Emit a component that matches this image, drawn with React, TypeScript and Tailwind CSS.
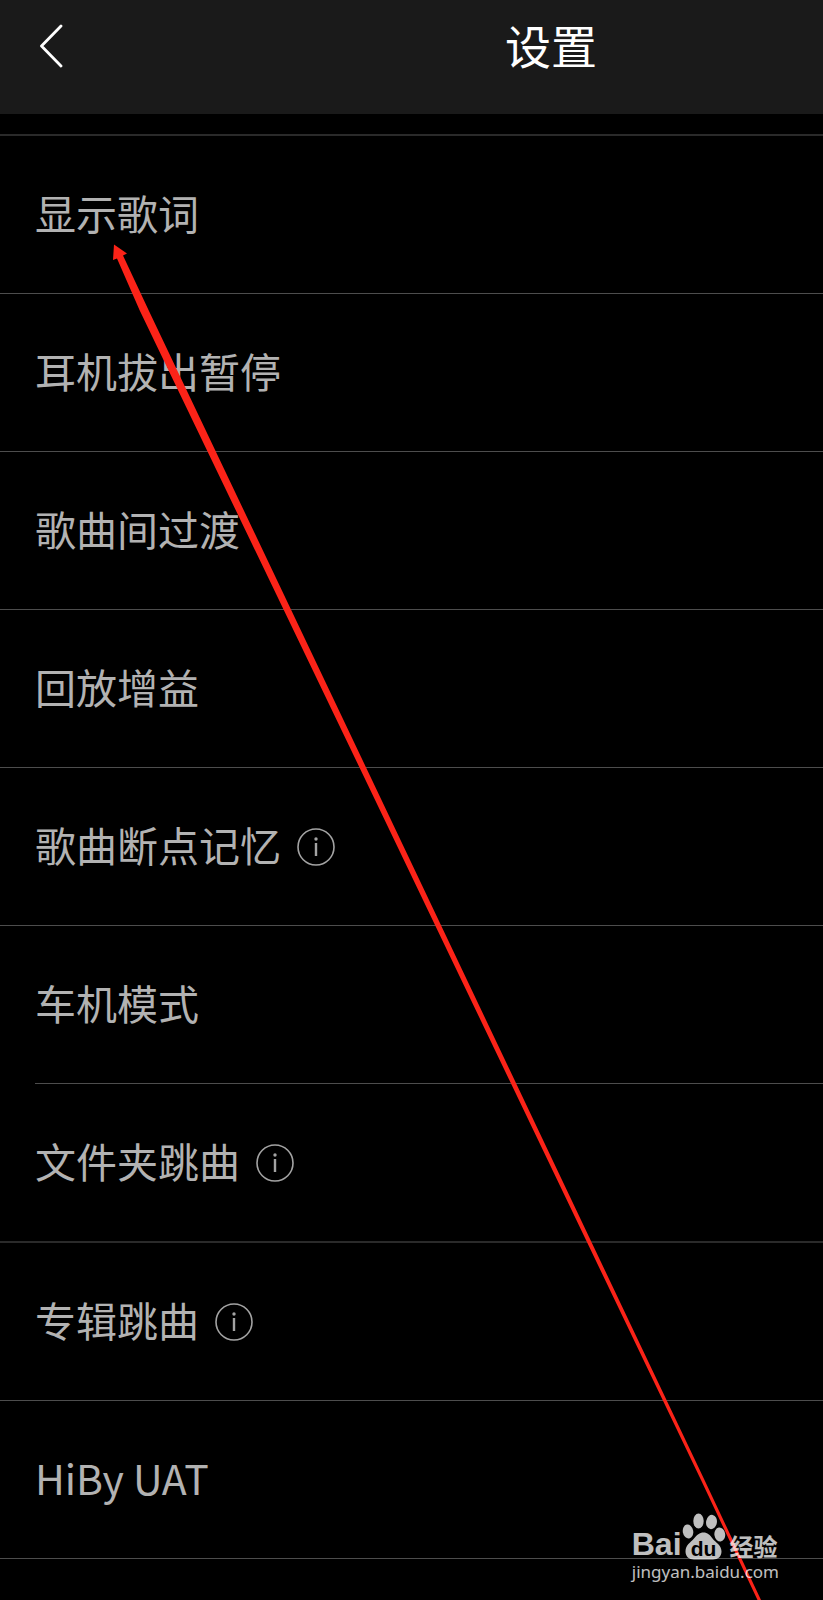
import clsx from "clsx"

type Divider = "full" | "inset" | "thick"

interface SettingItem {
  label: string
  hasInfo?: boolean
  divider?: Divider
}

const settings: SettingItem[] = [
  { label: "显示歌词" },
  { label: "耳机拔出暂停" },
  { label: "歌曲间过渡" },
  { label: "回放增益" },
  { label: "歌曲断点记忆", hasInfo: true },
  { label: "车机模式", divider: "inset" },
  { label: "文件夹跳曲", hasInfo: true, divider: "thick" },
  { label: "专辑跳曲", hasInfo: true },
  { label: "HiBy UAT" },
]

export default function App() {
  return (
    <div className="relative min-h-screen overflow-hidden bg-black pb-[41px] font-['Noto_Sans_CJK_SC',sans-serif]">
      <Header />

      <main className="mt-5 border-t-2 border-[#2a2a2a]">
        <ul>
          {settings.map((item) => (
            <SettingRow key={item.label} {...item} />
          ))}
        </ul>
      </main>

      <PointerArrow />
      <Watermark />
    </div>
  )
}

function Header() {
  return (
    <header className="flex h-[114px] items-start justify-between bg-[#1a1a1a] pt-3 pr-[226px] pl-9">
      <button
        type="button"
        aria-label="返回"
        className="flex h-[68px] w-8 items-center justify-center text-white"
      >
        <svg
          viewBox="0 0 24 44"
          className="h-11 w-6"
          fill="none"
          stroke="currentColor"
          strokeWidth="2.8"
          strokeLinecap="round"
          strokeLinejoin="round"
        >
          <path d="M21 2 1.5 22 21 42" />
        </svg>
      </button>
      <h1 className="text-[46px] leading-16 text-white">设置</h1>
    </header>
  )
}

function SettingRow({ label, hasInfo, divider = "full" }: SettingItem) {
  return (
    <li className={clsx(divider === "inset" && "pl-[35px]")}>
      <div
        className={clsx(
          "flex items-center gap-4",
          divider === "thick"
            ? "border-b-2 border-[#2a2a2a]"
            : "border-b border-[#4d4d4d]",
          divider !== "inset" && "pl-[35px]",
        )}
      >
        <button
          type="button"
          className="h-[157px] pb-1.5 text-left text-[41px] leading-[60px] text-[#b2b2b2]"
        >
          {label}
        </button>
        {hasInfo ? (
          <button
            type="button"
            aria-label={`${label}说明`}
            className="text-[#a3a3a3]"
          >
            <InfoIcon />
          </button>
        ) : null}
      </div>
    </li>
  )
}

function InfoIcon() {
  return (
    <svg viewBox="0 0 38 38" className="size-[38px]" fill="none">
      <circle cx="19" cy="19" r="18" stroke="currentColor" strokeWidth="1.6" />
      <circle cx="19" cy="11" r="1.7" fill="currentColor" />
      <path d="M19 15v13" stroke="currentColor" strokeWidth="2.4" />
    </svg>
  )
}

function PointerArrow() {
  return (
    <svg
      viewBox="0 0 823 1600"
      className="pointer-events-none absolute top-0 left-0 w-full"
      aria-hidden="true"
    >
      <path
        d="M114 244.5 127 253.5 123 255.5 148.5 310 372 780 704.5 1480 761 1600H757.5L701 1480 365.5 780 139.5 310 117 258.5 113 260Z"
        fill="#fb2318"
      />
    </svg>
  )
}

function Watermark() {
  return (
    <div className="absolute right-11 bottom-4 text-white opacity-75">
      <div className="flex items-end">
        <span className="font-['Liberation_Sans',sans-serif] text-[32px] leading-8 font-bold">
          Bai
        </span>
        <PawLogo />
        <span className="ml-1 text-[24px] leading-7 font-bold">经验</span>
      </div>
      <a
        href="#jingyan"
        className="block font-['Noto_Sans',sans-serif] text-[17px] leading-6"
      >
        jingyan.baidu.com
      </a>
    </div>
  )
}

function PawLogo() {
  return (
    <svg viewBox="0 0 44 47" className="h-[47px] w-11" fill="currentColor">
      <ellipse cx="6" cy="18.5" rx="5.2" ry="7" transform="rotate(-10 6 18.5)" />
      <ellipse cx="16.5" cy="8" rx="5.2" ry="7.4" />
      <ellipse cx="29.5" cy="9" rx="5.4" ry="7.2" transform="rotate(10 29.5 9)" />
      <ellipse cx="37.8" cy="21.5" rx="5.4" ry="7" transform="rotate(-8 37.8 21.5)" />
      <path d="M21.5 19.5c4 0 6.5 2.5 9 6 3 4 9 6.500 9 13 0 5-3.500 8-8.500 8h-19C7 46.500 3.500 43.500 3.500 38.500c0-6.500 5-9 8.500-13 3-3.500 5.500-6 9.500-6Z" />
      <text
        x="21.5"
        y="43"
        textAnchor="middle"
        fontSize="21"
        fontWeight="700"
        fontFamily="Liberation Sans, sans-serif"
        fill="#000"
      >
        du
      </text>
    </svg>
  )
}
